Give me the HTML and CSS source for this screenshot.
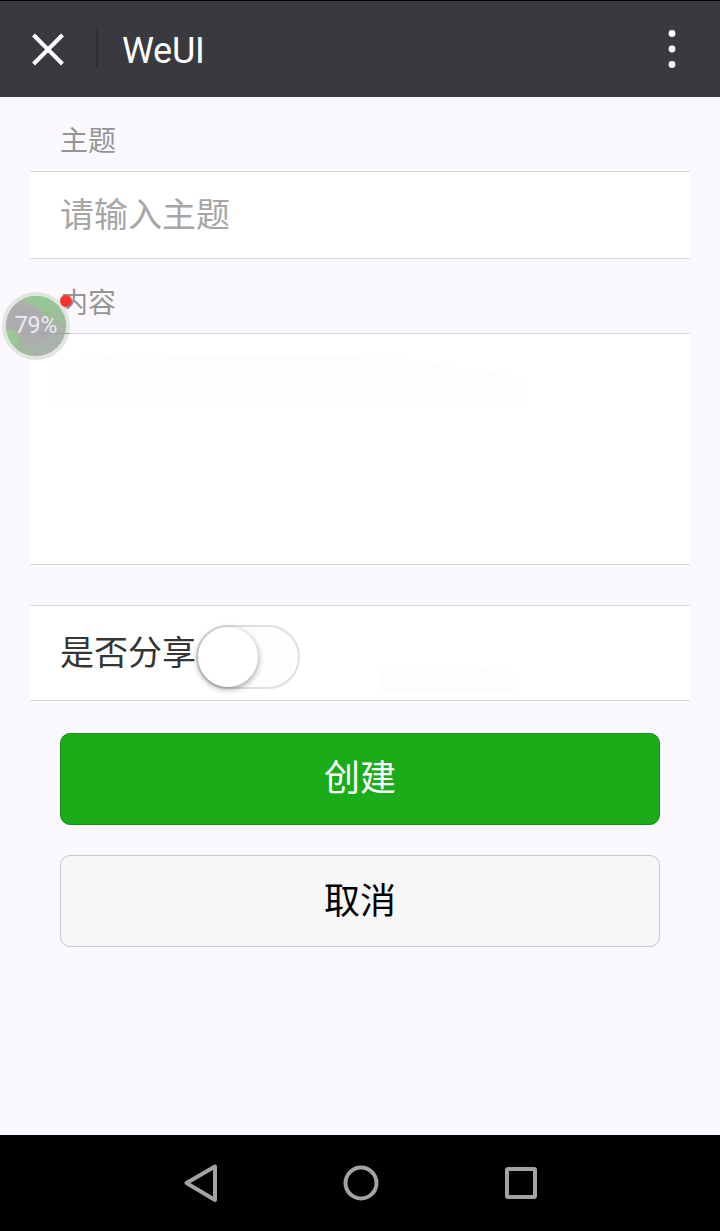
FILE: index.html
```html
<!DOCTYPE html>
<html lang="zh-CN">
<head>
<meta charset="utf-8">
<title>WeUI</title>
<link rel="stylesheet" href="styles.css">
</head>
<body>
<header class="topbar">
  <svg class="close" viewBox="0 0 34 34"><path d="M2.500 2 31.500 31M31.500 2 2.500 31"/></svg>
  <span class="divider"></span>
  <h1 class="title">WeUI</h1>
  <svg class="more" viewBox="0 0 8 40"><circle cx="4" cy="4.500" r="3.400"/><circle cx="4" cy="20" r="3.400"/><circle cx="4" cy="35.500" r="3.400"/></svg>
</header>
<main class="page">
  <div class="label">主题</div>
  <div class="cell cell-input"><input class="input" type="text" placeholder="请输入主题"></div>
  <div class="label">内容</div>
  <div class="cell cell-area"><div class="area-shade"></div></div>
  <div class="cell cell-switch">
    <span class="switch-label">是否分享</span>
    <span class="switch"><span class="knob"></span></span>
    <span class="switch-shade"></span>
  </div>
  <div class="actions">
    <button class="btn btn-primary">创建</button>
    <button class="btn btn-default">取消</button>
  </div>
  <div class="float-ball">
    <svg class="ball" viewBox="0 0 68 68">
      <defs>
        <linearGradient id="leaf" x1="0" y1="0" x2="0" y2="1"><stop offset="0" stop-color="#93cc92"/><stop offset="1" stop-color="#a3b5a0"/></linearGradient>
        <clipPath id="disc"><circle cx="34" cy="34" r="30"/></clipPath>
      </defs>
      <circle cx="34" cy="34" r="34" fill="#dfe6df"/>
      <g clip-path="url(#disc)">
        <rect width="68" height="68" fill="#aab3aa"/>
        <path d="M10 0H50L66 22V38L40 20 30 13Z" fill="url(#leaf)"/>
        <path d="M0 24 10 12 30 14 40 22 52 40 40 50 27 55 16 42 0 36Z" fill="#aeabb0"/>
        <path d="M2 35 12 39 22 50 30 64H14Z" fill="#9bc698"/>
        <path d="M17 44 27 54 29 66 14 58Z" fill="#a5b6a2"/>
      </g>
      <path d="M36 41.500H68" stroke="#a2a2a4"/>
    </svg>
    <span class="percent">79%</span>
    <span class="dot"></span>
  </div>
</main>
<nav class="navbar">
  <svg class="nav-icons" viewBox="0 0 720 96">
    <path d="M186.500 48 215 31.500V65Z"/>
    <circle cx="361" cy="48" r="15.500"/>
    <rect x="507" y="34" width="28" height="28" rx="1"/>
  </svg>
</nav>
</body>
</html>
```
FILE: styles.css
```css
* { box-sizing: border-box; }
body {
  margin: 0;
  height: 1231px;
  display: flex;
  flex-direction: column;
  background: #fbf9fe;
  font-family: Roboto, "Noto Sans CJK SC", sans-serif;
  overflow: hidden;
}
.topbar {
  height: 97px;
  flex: none;
  display: flex;
  align-items: center;
  padding: 2px 44px 0 31px;
  background: #393a3f;
  border-top: 1px solid #000;
}
.close { width: 34px; height: 34px; fill: none; stroke: #fff; stroke-width: 4; }
.divider { width: 2px; height: 42px; margin: 0 24px 6px 31px; background: #2f3034; }
.title { margin: 2px 0 0; color: #fff; font-size: 36px; font-weight: 400; line-height: 42px; letter-spacing: -.3px; flex: 1; }
.more { width: 8px; height: 40px; margin-bottom: 2px; fill: #fff; }
.page { position: relative; flex: 1; padding: 0 30px; }
.label { height: 74px; padding: 24px 30px 0; color: #959595; font-size: 28px; line-height: 42px; }
.cell { background: #fff; border: solid #d9d9d9; border-width: 1px 0; }
.cell-input { height: 88px; padding: 18px 30px; }
.input {
  display: block;
  width: 100%;
  height: 50px;
  padding: 0;
  border: 0;
  outline: 0;
  background: none;
  font: 34px/50px Roboto, "Noto Sans CJK SC", sans-serif;
}
.input::placeholder { color: #a6a6a6; opacity: 1; }
.cell-area { height: 232px; padding: 20px 24px; }
.area-shade {
  width: 474px;
  height: 51px;
  background: #fdfcff;
  clip-path: polygon(0 8px, 60px 1px, 340px 3px, 430px 17px, 474px 23px, 474px 51px, 0 51px);
}
.cell-switch { height: 96px; margin-top: 40px; padding-left: 30px; display: flex; align-items: flex-start; }
.switch-label { margin-top: 22px; color: #353535; font-size: 34px; line-height: 50px; }
.switch { width: 104px; height: 64px; margin-top: 19px; border: 2px solid #dfdfdf; border-radius: 32px; background: #fdfdfd; }
.knob { display: block; width: 60px; height: 60px; border-radius: 50%; background: #fff; box-shadow: 0 2px 6px rgba(0, 0, 0, .4); }
.switch-shade {
  width: 140px;
  height: 27px;
  margin: 59px 0 0 79px;
  background: #fefcff;
  clip-path: polygon(0 0, 90px 1px, 140px 7px, 140px 27px, 0 27px);
}
.actions { display: flex; flex-direction: column; gap: 30px; padding: 32px 30px 0; }
.btn {
  height: 92px;
  padding: 0;
  border: 1px solid #178e17;
  border-radius: 10px;
  font: 36px/84px Roboto, "Noto Sans CJK SC", sans-serif;
}
.btn-primary { background: #1aad19; color: #fff; }
.btn-default { padding-top: 1px; background: #f7f7f7; border-color: #c6c6c6; color: #000; }
.float-ball { position: absolute; left: 2px; top: 195px; width: 68px; height: 68px; }
.ball { display: block; width: 68px; height: 68px; }
.percent { position: absolute; inset: 0; color: #ecebec; font-size: 23px; line-height: 68px; text-align: center; }
.dot { position: absolute; left: 58px; top: 3px; width: 12px; height: 12px; border-radius: 50%; background: #f43530; }
.navbar { height: 96px; flex: none; background: #000; }
.nav-icons { display: block; width: 720px; height: 96px; fill: none; stroke: #a3a3a3; stroke-width: 4; stroke-linejoin: round; }
```
